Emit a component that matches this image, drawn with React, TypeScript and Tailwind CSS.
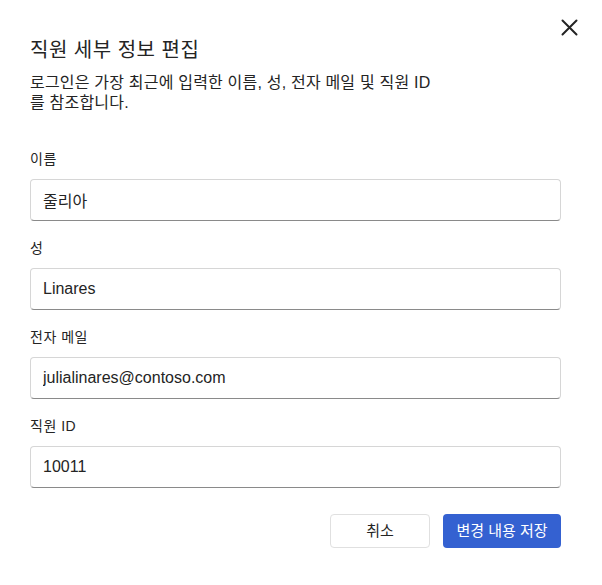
import { useState } from 'react';

const fields = [
  { id: 'first', label: '이름', value: '줄리아' },
  { id: 'last', label: '성', value: 'Linares' },
  { id: 'email', label: '전자 메일', value: 'julialinares@contoso.com' },
  { id: 'employee', label: '직원 ID', value: '10011' },
];

const App = () => {
  const [values, setValues] = useState<Record<string, string>>(
    Object.fromEntries(fields.map((f) => [f.id, f.value]))
  );

  return (
    <div
      className="min-h-screen w-[602px] bg-white pl-[30px] pr-[41px] text-[#242424]"
      style={{ fontFamily: '"Liberation Sans", "Noto Sans CJK KR", sans-serif' }}
    >
      {/* Close */}
      <div className="flex justify-end pt-[19px] -mr-[17px]">
        <button className="h-[17px] w-[17px] text-[#242424]" title="닫기">
          <svg viewBox="0 0 17 17" className="h-[17px] w-[17px]" fill="none" stroke="currentColor" strokeWidth={2} strokeLinecap="round">
            <path d="M1.5 1.5l14 14M15.5 1.5l-14 14" />
          </svg>
        </button>
      </div>

      <h1 className="text-[20px] leading-[28px] font-normal tracking-[0.5px]">직원 세부 정보 편집</h1>
      <p className="mt-[9px] text-[16px] leading-[20px] tracking-[0.2px]">
        로그인은 가장 최근에 입력한 이름, 성, 전자 메일 및 직원 ID
        <br />를 참조합니다.
      </p>

      <div className="mt-[36px] flex flex-col gap-[17px]">
        {fields.map((f) => (
          <div key={f.id}>
            <label htmlFor={f.id} className="block text-[14px] leading-[20px] tracking-[0.5px] mb-[10px]">
              {f.label}
            </label>
            <input
              id={f.id}
              value={values[f.id]}
              onChange={(e) => setValues({ ...values, [f.id]: e.target.value })}
              className="block h-[42px] w-full rounded-[4px] border border-[#d6d6d6] border-b-[#8a8a8a] bg-white px-[12px] text-[16px] text-[#242424] outline-none"
            />
          </div>
        ))}
      </div>

      <div className="mt-[26px] flex justify-end gap-[13px]">
        <button className="h-[34px] w-[100px] rounded-[4px] border border-[#e0e0e0] bg-white text-[15px] text-[#242424]">
          취소
        </button>
        <button className="h-[34px] w-[118px] rounded-[4px] bg-[#3461d1] text-[15px] text-white">
          변경 내용 저장
        </button>
      </div>
    </div>
  );
};

export default App;
